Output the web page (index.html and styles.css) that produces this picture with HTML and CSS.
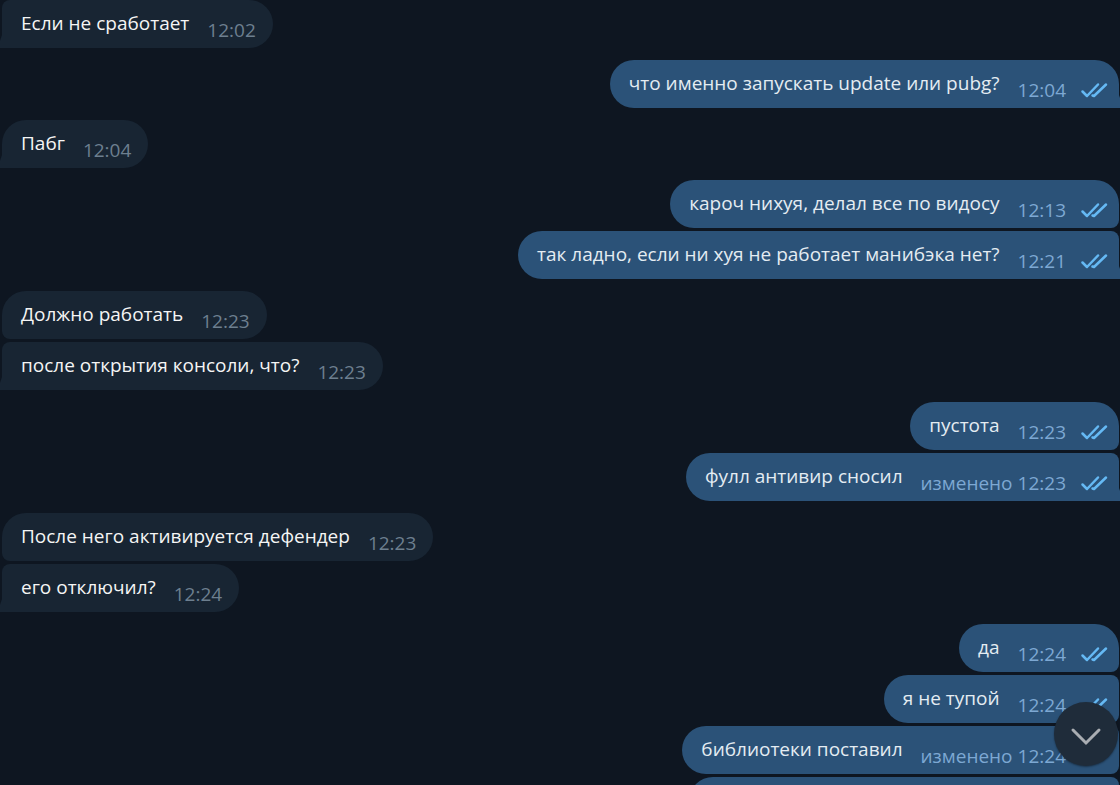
FILE: index.html
```html
<!DOCTYPE html>
<html lang="ru">
<head>
  <meta charset="UTF-8">
  <meta name="viewport" content="width=device-width, initial-scale=1.0">
  <title>Чат</title>
  <link rel="stylesheet" href="styles.css">
</head>
<body>
  <svg class="sprite" aria-hidden="true">
    <symbol id="ticks" viewBox="0 0 28 16">
      <path d="M2.5 9.5 L7 14 L18 2.5 M12.5 13.5 L14 14 L26 2.5" />
    </symbol>
  </svg>

  <main class="chat">
    <div class="group">
      <div class="bubble in joined last"><span class="text">Если не сработает</span><span class="meta"><time>12:02</time></span></div>
    </div>

    <div class="group">
      <div class="bubble out last"><span class="text">что именно запускать update или pubg?</span><span class="meta"><time>12:04</time><svg class="ticks"><use href="#ticks" /></svg></span></div>
    </div>

    <div class="group">
      <div class="bubble in last"><span class="text">Пабг</span><span class="meta"><time>12:04</time></span></div>
    </div>

    <div class="group">
      <div class="bubble out"><span class="text">кароч нихуя, делал все по видосу</span><span class="meta"><time>12:13</time><svg class="ticks"><use href="#ticks" /></svg></span></div>
      <div class="bubble out joined last"><span class="text">так ладно, если ни хуя не работает манибэка нет?</span><span class="meta"><time>12:21</time><svg class="ticks"><use href="#ticks" /></svg></span></div>
    </div>

    <div class="group">
      <div class="bubble in"><span class="text">Должно работать</span><span class="meta"><time>12:23</time></span></div>
      <div class="bubble in joined last"><span class="text">после открытия консоли, что?</span><span class="meta"><time>12:23</time></span></div>
    </div>

    <div class="group">
      <div class="bubble out"><span class="text">пустота</span><span class="meta"><time>12:23</time><svg class="ticks"><use href="#ticks" /></svg></span></div>
      <div class="bubble out joined last"><span class="text">фулл антивир сносил</span><span class="meta">изменено <time>12:23</time><svg class="ticks"><use href="#ticks" /></svg></span></div>
    </div>

    <div class="group">
      <div class="bubble in"><span class="text">После него активируется дефендер</span><span class="meta"><time>12:23</time></span></div>
      <div class="bubble in joined last"><span class="text">его отключил?</span><span class="meta"><time>12:24</time></span></div>
    </div>

    <div class="group">
      <div class="bubble out"><span class="text">да</span><span class="meta"><time>12:24</time><svg class="ticks"><use href="#ticks" /></svg></span></div>
      <div class="bubble out joined"><span class="text">я не тупой</span><span class="meta"><time>12:24</time><svg class="ticks"><use href="#ticks" /></svg></span></div>
      <div class="bubble out joined"><span class="text">библиотеки поставил</span><span class="meta">изменено <time>12:24</time><svg class="ticks"><use href="#ticks" /></svg></span></div>
      <div class="bubble out joined empty"></div>
    </div>
  </main>

  <button class="scroll-down" type="button" aria-label="Вниз">
    <svg viewBox="0 0 32 20"><path d="M3 4 L16 17 L29 4" /></svg>
  </button>
</body>
</html>
```
FILE: styles.css
```css
* {
  box-sizing: border-box;
}
body {
  margin: 0;
  background: #0e1621;
  color: #f5f5f5;
  font-family: "Open Sans", "Noto Sans", sans-serif;
  font-size: 19px;
  line-height: 28px;
}
.sprite {
  display: none;
}
.chat {
  display: flex;
  flex-direction: column;
  gap: 12px;
  height: 100vh;
  padding: 0 1px 0 2px;
  overflow: hidden;
}
.group {
  display: flex;
  flex-direction: column;
  flex-shrink: 0;
  gap: 3px;
}

/* messages */
.bubble {
  position: relative;
  display: flex;
  align-items: flex-start;
  gap: 18px;
  min-height: 48px;
  padding: 9px 17px 4px 19px;
  border-radius: 24px;
}
.in {
  align-self: flex-start;
  background: #182533;
  border-bottom-left-radius: 8px;
}
.out {
  align-self: flex-end;
  padding-right: 11px;
  background: #2b5278;
  color: #e4ecf2;
  border-bottom-right-radius: 8px;
}
.in.joined {
  border-top-left-radius: 8px;
}
.out.joined {
  border-top-right-radius: 8px;
}
.in.last {
  border-bottom-left-radius: 0;
}
.out.last {
  border-bottom-right-radius: 0;
}
.empty {
  width: 430px;
}

/* tail of the last message in a group */
.last::after {
  content: "";
  position: absolute;
  bottom: 0;
  width: 2px;
  height: 13px;
  background: inherit;
}
.in.last::after {
  right: 100%;
  clip-path: polygon(100% 0, 100% 100%, 0 100%, 0 45%);
}
.out.last::after {
  left: 100%;
  clip-path: polygon(0 0, 100% 45%, 100% 100%, 0 100%);
}

.meta {
  display: flex;
  gap: 5px;
  margin-top: 7px;
  color: #6d7f8f;
}
.out .meta {
  color: #7da8d3;
}
.ticks {
  width: 28px;
  height: 16px;
  margin: 6px 0 0 9px;
  fill: none;
  stroke: #65b9f4;
  stroke-width: 2.5;
  stroke-linecap: round;
  stroke-linejoin: round;
}

.scroll-down {
  position: fixed;
  right: 2px;
  bottom: 19px;
  display: flex;
  align-items: center;
  justify-content: center;
  width: 64px;
  height: 64px;
  padding: 4px 0 0;
  border: none;
  border-radius: 50%;
  background: #1f2c3a;
  box-shadow: 0 1px 2px rgba(0, 0, 0, 0.4);
  cursor: pointer;
}
.scroll-down svg {
  width: 32px;
  height: 20px;
  fill: none;
  stroke: #a9adb2;
  stroke-width: 3;
  stroke-linecap: round;
}
```
